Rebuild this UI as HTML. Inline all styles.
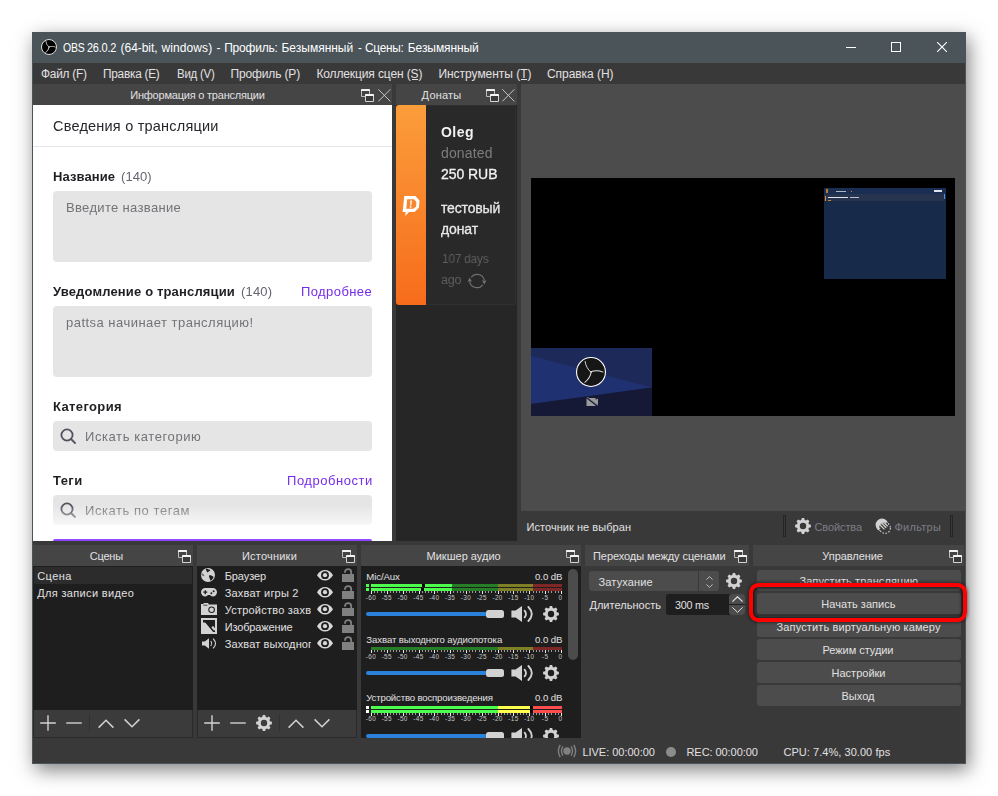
<!DOCTYPE html>
<html lang="ru">
<head>
<meta charset="utf-8">
<title>OBS 26.0.2 (64-bit, windows) - Профиль: Безымянный - Сцены: Безымянный</title>
<style>
html,body{margin:0;padding:0;background:#fff;}
body{width:998px;height:796px;overflow:hidden;position:relative;font-family:"Liberation Sans","DejaVu Sans",sans-serif;}
#root{position:absolute;left:0;top:0;width:998px;height:796px;overflow:hidden;}
#root div,#root svg,#root span.t{position:absolute;display:block;}
#root span.t{white-space:nowrap;}
#root div div, #root div span.t{position:absolute;}
</style>
</head>
<body>
<div id="root">
<div style="left:32px;top:32px;width:934px;height:732px;background:#3a393a;box-shadow:3px 6px 18px rgba(0,0,0,0.5);"></div>
<div style="left:32px;top:32px;width:934px;height:31px;background:#4a5459;"></div>
<div style="left:32px;top:63px;width:1px;height:701px;background:#4a5459;"></div>
<div style="left:965px;top:63px;width:1px;height:701px;background:#4a5459;"></div>
<div style="left:32px;top:763px;width:934px;height:1px;background:#4a5459;"></div>
<svg style="left:41px;top:39px;" width="16" height="16" viewBox="0 0 16 16"><circle cx="8.0" cy="8.0" r="7.50" fill="#000" stroke="#dcdcdc" stroke-width="1.0"/><path transform="rotate(0 8.0 8.0)" d="M8.16 8.32Q5.28 5.92 4.88 2.40" fill="none" stroke="#c8c8c8" stroke-width="0.9" stroke-linecap="round"/><path transform="rotate(120 8.0 8.0)" d="M8.16 8.32Q5.28 5.92 4.88 2.40" fill="none" stroke="#c8c8c8" stroke-width="0.9" stroke-linecap="round"/><path transform="rotate(240 8.0 8.0)" d="M8.16 8.32Q5.28 5.92 4.88 2.40" fill="none" stroke="#c8c8c8" stroke-width="0.9" stroke-linecap="round"/></svg>
<span class="t" style="left:62.6px;top:42.24px;font-size:12px;line-height:12px;color:#ffffff;letter-spacing:-0.250px;transform:scaleX(0.8698);transform-origin:0 0;">OBS</span>
<span class="t" style="left:87.1px;top:42.24px;font-size:12px;line-height:12px;color:#ffffff;letter-spacing:-0.250px;transform:scaleX(0.9125);transform-origin:0 0;">26.0.2</span>
<span class="t" style="left:120.6px;top:42.24px;font-size:12px;line-height:12px;color:#ffffff;letter-spacing:-0.061px;">(64-bit,</span>
<span class="t" style="left:161.4px;top:42.24px;font-size:12px;line-height:12px;color:#ffffff;letter-spacing:0.105px;">windows)</span>
<span class="t" style="left:216.5px;top:42.24px;font-size:12px;line-height:12px;color:#ffffff;letter-spacing:-0.200px;">-</span>
<span class="t" style="left:224.2px;top:42.24px;font-size:12px;line-height:12px;color:#ffffff;letter-spacing:-0.219px;">Профиль:</span>
<span class="t" style="left:281.5px;top:42.24px;font-size:12px;line-height:12px;color:#ffffff;letter-spacing:-0.005px;">Безымянный</span>
<span class="t" style="left:357.7px;top:42.24px;font-size:12px;line-height:12px;color:#ffffff;letter-spacing:-0.250px;transform:scaleX(0.9600);transform-origin:0 0;">-</span>
<span class="t" style="left:365.2px;top:42.24px;font-size:12px;line-height:12px;color:#ffffff;letter-spacing:-0.250px;transform:scaleX(0.9848);transform-origin:0 0;">Сцены:</span>
<span class="t" style="left:407.8px;top:42.24px;font-size:12px;line-height:12px;color:#ffffff;letter-spacing:-0.079px;">Безымянный</span>
<div style="left:846px;top:47px;width:10px;height:1px;background:#ffffff;"></div>
<svg style="left:891px;top:42px;" width="10" height="10" viewBox="0 0 10 10"><rect x="0.5" y="0.5" width="9" height="9" fill="none" stroke="#fff" stroke-width="1"/></svg>
<svg style="left:937px;top:42px;" width="10" height="10" viewBox="0 0 10 10"><path d="M0 0L10 10M10 0L0 10" stroke="#fff" stroke-width="1.1" fill="none"/></svg>
<div style="left:33px;top:63px;width:932px;height:21px;background:#3a393a;"></div>
<span class="t" style="left:41.3px;top:68.24px;font-size:12px;line-height:12px;color:#e1e0e1;letter-spacing:-0.250px;transform:scaleX(0.9893);transform-origin:0 0;">Файл (F)</span>
<span class="t" style="left:103.4px;top:68.24px;font-size:12px;line-height:12px;color:#e1e0e1;letter-spacing:-0.250px;transform:scaleX(0.9861);transform-origin:0 0;">Правка (E)</span>
<span class="t" style="left:176.6px;top:68.24px;font-size:12px;line-height:12px;color:#e1e0e1;letter-spacing:-0.250px;transform:scaleX(0.9538);transform-origin:0 0;">Вид (V)</span>
<span class="t" style="left:230.5px;top:68.24px;font-size:12px;line-height:12px;color:#e1e0e1;letter-spacing:-0.147px;">Профиль (P)</span>
<span class="t" style="left:316.4px;top:68.24px;font-size:12px;line-height:12px;color:#e1e0e1;letter-spacing:-0.121px;">Коллекция сцен (S)</span>
<span class="t" style="left:438.4px;top:68.24px;font-size:12px;line-height:12px;color:#e1e0e1;letter-spacing:-0.027px;">Инструменты (T)</span>
<span class="t" style="left:547px;top:68.24px;font-size:12px;line-height:12px;color:#e1e0e1;letter-spacing:-0.055px;">Справка (H)</span>
<div style="left:412px;top:79px;width:6px;height:1px;background:#e1e0e1;"></div>
<div style="left:521px;top:79px;width:6px;height:1px;background:#e1e0e1;"></div>
<div style="left:33px;top:84px;width:359px;height:21px;background:#464546;"></div>
<span class="t" style="left:130.2px;top:89.59px;font-size:11px;line-height:11px;color:#e1e0e1;letter-spacing:-0.213px;">Информация о трансляции</span>
<svg style="left:361px;top:89px;" width="13" height="13" viewBox="0 0 13 13"><path d="M0.5 1.5V7.5H8.5V1.5" fill="none" stroke="#bdbdbd" stroke-width="1"/><rect x="0" y="0" width="9" height="2" rx="0.6" fill="#f2f2f2"/><rect x="4" y="5" width="9" height="8" rx="0.8" fill="#3b3a3b"/><path d="M4.5 6.5V12.5H12.5V6.5" fill="none" stroke="#d4d4d4" stroke-width="1"/><rect x="4" y="5" width="9" height="2" rx="0.6" fill="#f6f6f6"/></svg>
<svg style="left:377.5px;top:89px;" width="13" height="13" viewBox="0 0 13 13"><path d="M0.3 0.3L12.4 12.4M12.4 0.3L0.3 12.4" stroke="#c4c4c4" stroke-width="1" fill="none"/></svg>
<div style="left:33px;top:105px;width:359px;height:436px;background:#ffffff;"></div>
<span class="t" style="left:53.4px;top:118.73px;font-size:14.5px;line-height:14.5px;color:#26262c;letter-spacing:0.209px;will-change:transform;">Сведения о трансляции</span>
<div style="left:33px;top:146px;width:359px;height:1px;background:#e6e6ea;"></div>
<span class="t" style="left:53.4px;top:169.80px;font-size:13px;line-height:13px;color:#1f1f23;font-weight:700;letter-spacing:0.097px;will-change:transform;">Название</span>
<span class="t" style="left:121.4px;top:169.80px;font-size:13px;line-height:13px;color:#65656f;letter-spacing:0.076px;will-change:transform;">(140)</span>
<div style="left:53px;top:191px;width:319px;height:71px;background:#e5e5e5;border-radius:4px;"></div>
<span class="t" style="left:65.5px;top:200.80px;font-size:13px;line-height:13px;color:#737378;letter-spacing:0.338px;will-change:transform;">Введите название</span>
<span class="t" style="left:53.4px;top:285.40px;font-size:13px;line-height:13px;color:#1f1f23;font-weight:700;letter-spacing:0.154px;will-change:transform;">Уведомление о трансляции</span>
<span class="t" style="left:240.5px;top:285.40px;font-size:13px;line-height:13px;color:#65656f;letter-spacing:0.187px;will-change:transform;">(140)</span>
<span class="t" style="left:301.2px;top:285.40px;font-size:13px;line-height:13px;color:#772ce8;letter-spacing:0.409px;will-change:transform;">Подробнее</span>
<div style="left:53px;top:306px;width:319px;height:71px;background:#e5e5e5;border-radius:4px;"></div>
<span class="t" style="left:65.5px;top:315.90px;font-size:13px;line-height:13px;color:#737378;letter-spacing:0.477px;will-change:transform;">pattsa начинает трансляцию!</span>
<span class="t" style="left:53.4px;top:400.00px;font-size:13px;line-height:13px;color:#1f1f23;font-weight:700;letter-spacing:0.374px;will-change:transform;">Категория</span>
<div style="left:53px;top:421px;width:319px;height:30px;background:#e5e5e5;border-radius:4px;"></div>
<svg style="left:60px;top:428px;" width="16" height="16" viewBox="0 0 16 16"><circle cx="7" cy="7" r="5.6" fill="none" stroke="#53535f" stroke-width="1.8"/><path d="M11 11L15 15" stroke="#53535f" stroke-width="1.8" stroke-linecap="round"/></svg>
<span class="t" style="left:85.3px;top:430.00px;font-size:13px;line-height:13px;color:#737378;letter-spacing:0.588px;will-change:transform;">Искать категорию</span>
<span class="t" style="left:53.4px;top:474.20px;font-size:13px;line-height:13px;color:#1f1f23;font-weight:700;letter-spacing:0.418px;will-change:transform;">Теги</span>
<span class="t" style="left:286.5px;top:474.20px;font-size:13px;line-height:13px;color:#772ce8;letter-spacing:0.542px;will-change:transform;">Подробности</span>
<div style="left:53px;top:495px;width:319px;height:30px;background:#e5e5e5;border-radius:4px;"></div>
<svg style="left:60px;top:502px;" width="16" height="16" viewBox="0 0 16 16"><circle cx="7" cy="7" r="5.6" fill="none" stroke="#53535f" stroke-width="1.8"/><path d="M11 11L15 15" stroke="#53535f" stroke-width="1.8" stroke-linecap="round"/></svg>
<span class="t" style="left:85.3px;top:503.60px;font-size:13px;line-height:13px;color:#737378;letter-spacing:0.555px;will-change:transform;">Искать по тегам</span>
<div style="left:33px;top:505px;width:359px;height:34px;background:linear-gradient(to bottom, rgba(255,255,255,0) 0%, rgba(255,255,255,0.95) 80%, #fff 100%);"></div>
<div style="left:53px;top:539px;width:319px;height:2px;background:#9147ff;border-radius:4px 4px 0 0;"></div>
<div style="left:396px;top:84px;width:121px;height:21px;background:#464546;"></div>
<span class="t" style="left:421.6px;top:89.59px;font-size:11px;line-height:11px;color:#e1e0e1;letter-spacing:0.219px;">Донаты</span>
<svg style="left:486px;top:89px;" width="13" height="13" viewBox="0 0 13 13"><path d="M0.5 1.5V7.5H8.5V1.5" fill="none" stroke="#bdbdbd" stroke-width="1"/><rect x="0" y="0" width="9" height="2" rx="0.6" fill="#f2f2f2"/><rect x="4" y="5" width="9" height="8" rx="0.8" fill="#3b3a3b"/><path d="M4.5 6.5V12.5H12.5V6.5" fill="none" stroke="#d4d4d4" stroke-width="1"/><rect x="4" y="5" width="9" height="2" rx="0.6" fill="#f6f6f6"/></svg>
<svg style="left:502px;top:89px;" width="13" height="13" viewBox="0 0 13 13"><path d="M0.3 0.3L12.4 12.4M12.4 0.3L0.3 12.4" stroke="#c4c4c4" stroke-width="1" fill="none"/></svg>
<div style="left:396px;top:105px;width:121px;height:436px;background:#262626;"></div>
<div style="left:396px;top:105px;width:120px;height:200px;background:#292929;border-radius:3px;box-sizing:border-box;border:1px solid #303030;"></div>
<div style="left:396px;top:105px;width:30px;height:200px;background:linear-gradient(to bottom,#fb9d3b,#f76c1c);border-radius:3px 0 0 3px;"></div>
<span class="t" style="left:440.8px;top:125.15px;font-size:14px;line-height:14px;color:#f2f2f2;font-weight:700;letter-spacing:0.450px;will-change:transform;">Oleg</span>
<span class="t" style="left:441px;top:146.15px;font-size:14px;line-height:14px;color:#7d7d7d;letter-spacing:0.137px;will-change:transform;">donated</span>
<span class="t" style="left:441px;top:167.15px;font-size:14px;line-height:14px;color:#f2f2f2;letter-spacing:-0.048px;will-change:transform;-webkit-text-stroke:0.3px #f2f2f2;">250 RUB</span>
<span class="t" style="left:441px;top:200.95px;font-size:14px;line-height:14px;color:#e8e8e8;letter-spacing:-0.161px;will-change:transform;-webkit-text-stroke:0.3px #e8e8e8;">тестовый</span>
<span class="t" style="left:441px;top:221.75px;font-size:14px;line-height:14px;color:#e8e8e8;letter-spacing:-0.128px;will-change:transform;-webkit-text-stroke:0.3px #e8e8e8;">донат</span>
<span class="t" style="left:441.5px;top:252.62px;font-size:12.5px;line-height:12.5px;color:#5e5e5e;letter-spacing:-0.250px;transform:scaleX(0.9517);transform-origin:0 0;will-change:transform;">107 days</span>
<span class="t" style="left:441.3px;top:274.02px;font-size:12.5px;line-height:12.5px;color:#5e5e5e;letter-spacing:-0.250px;transform:scaleX(0.9934);transform-origin:0 0;will-change:transform;">ago</span>
<svg style="left:402px;top:195px;" width="19" height="22" viewBox="0 0 19 22"><path d="M2.3 1H13.4L17.5 5.4L17 12.6L12.6 17H6.9L3.3 21L3.6 17H0.6Z" fill="#fff"/><path d="M5.2 4.2H12L14.4 6.9L14.1 11.5L11.3 13.8H4.3Z" fill="#f9852c"/><path d="M8.3 5.6H9.9L9.4 10.4H8.2Z" fill="#fff"/><circle cx="8.6" cy="11.9" r="0.9" fill="#fff"/></svg>
<svg style="left:467px;top:271px;" width="20" height="20" viewBox="0 0 20 20"><path d="M4.2 6.2A7.4 7.4 0 0 1 17.3 9.2" fill="none" stroke="#707070" stroke-width="1.2"/><path d="M15.8 13.8A7.4 7.4 0 0 1 2.7 10.8" fill="none" stroke="#707070" stroke-width="1.2"/><path d="M0.6 10.6L2.7 6.6L4.9 10.6Z" fill="#707070"/><path d="M15.1 9.4L17.3 13.4L19.4 9.4Z" fill="#707070"/></svg>
<div style="left:521px;top:84px;width:444px;height:427px;background:#4c4c4c;"></div>
<div style="left:531px;top:178px;width:424px;height:238px;background:#000000;"></div>
<div style="left:824px;top:188px;width:122px;height:91px;background:#182a4a;"></div>
<div style="left:824px;top:188px;width:122px;height:6px;background:#1a2d52;"></div>
<div style="left:824px;top:194px;width:120px;height:7px;background:#27344f;"></div>
<div style="left:824.6px;top:195.6px;width:1.1px;height:5.2px;background:#f08a24;"></div>
<div style="left:944px;top:193.6px;width:1.1px;height:5.6px;background:#4a90e2;"></div>
<div style="left:826px;top:189.4px;width:2.4px;height:3.2px;background:#b9802f;"></div>
<div style="left:835.5px;top:190.7px;width:10.5px;height:1.4px;background:#aeb6c4;"></div>
<div style="left:850.6px;top:191px;width:1.3px;height:1.3px;background:#e88a26;"></div>
<div style="left:934px;top:190.2px;width:8px;height:2px;background:#dfe3ea;"></div>
<div style="left:828px;top:196.8px;width:19.5px;height:1.5px;background:#dfe4ec;"></div>
<div style="left:849.5px;top:196.8px;width:9px;height:1.5px;background:#b9c1cf;"></div>
<div style="left:828px;top:200px;width:3px;height:0.8px;background:#c8862a;"></div>
<svg style="left:531px;top:348px;" width="121" height="68" viewBox="0 0 121 68"><rect width="121" height="68" fill="#1d2a59"/><path d="M0 7.8L121 39.4L0 56Z" fill="#1f3170"/><path d="M0 56L121 39.4V68H0Z" fill="#161935"/></svg>
<svg style="left:576.4px;top:356.6px;" width="30" height="30" viewBox="0 0 30 30"><circle cx="15.0" cy="15.0" r="14.45" fill="#161616" stroke="#ffffff" stroke-width="1.1"/><path transform="rotate(0 15.0 15.0)" d="M15.30 15.60Q9.90 11.10 9.15 4.50" fill="none" stroke="#e8e8e8" stroke-width="0.9" stroke-linecap="round"/><path transform="rotate(120 15.0 15.0)" d="M15.30 15.60Q9.90 11.10 9.15 4.50" fill="none" stroke="#e8e8e8" stroke-width="0.9" stroke-linecap="round"/><path transform="rotate(240 15.0 15.0)" d="M15.30 15.60Q9.90 11.10 9.15 4.50" fill="none" stroke="#e8e8e8" stroke-width="0.9" stroke-linecap="round"/></svg>
<svg style="left:585.5px;top:397px;" width="12" height="9" viewBox="0 0 12 9"><path d="M0.5 1H9.5V2.8L12 1.4V8L9.5 6.6V9H0.5Z" fill="#9a9a9a"/><path d="M0 0L11.5 9" stroke="#16183a" stroke-width="1.6"/><path d="M0.4 -0.6L12 8.4" stroke="#9a9a9a" stroke-width="0.8"/></svg>
<div style="left:521px;top:511px;width:444px;height:30px;background:#3a393a;"></div>
<span class="t" style="left:526.5px;top:521.69px;font-size:11px;line-height:11px;color:#e1e0e1;letter-spacing:0.050px;">Источник не выбран</span>
<div style="left:783px;top:515px;width:3px;height:22px;background:#3a393a;box-sizing:border-box;border:1px solid #262526;"></div>
<div style="left:950px;top:515px;width:3px;height:22px;background:#3a393a;box-sizing:border-box;border:1px solid #262526;"></div>
<svg style="left:795px;top:518px;" width="16" height="16" viewBox="0 0 16 16"><path fill-rule="evenodd" fill="#d2d2d2" d="M6.27 2.09L6.83 0.09L9.17 0.09L9.73 2.09L10.96 2.60L12.77 1.57L14.43 3.23L13.40 5.04L13.91 6.27L15.91 6.83L15.91 9.17L13.91 9.73L13.40 10.96L14.43 12.77L12.77 14.43L10.96 13.40L9.73 13.91L9.17 15.91L6.83 15.91L6.27 13.91L5.04 13.40L3.23 14.43L1.57 12.77L2.60 10.96L2.09 9.73L0.09 9.17L0.09 6.83L2.09 6.27L2.60 5.04L1.57 3.23L3.23 1.57L5.04 2.60ZM11.20 8.00A3.2 3.2 0 1 0 4.80 8.00A3.2 3.2 0 1 0 11.20 8.00Z"/></svg>
<svg style="left:875px;top:518px;" width="17" height="17" viewBox="0 0 17 17"><circle cx="7" cy="7" r="6.4" fill="#d2d2d2"/><circle cx="10" cy="10" r="6" fill="#3a393a"/><circle cx="10" cy="10" r="5.4" fill="none" stroke="#d2d2d2" stroke-width="1.1" stroke-dasharray="1.6 1.5"/><path d="M4.4 6.4L9.4 11.4M6 4.6L11.2 9.8M7.8 3.4L12.6 8.2" stroke="#d2d2d2" stroke-width="1.3"/></svg>
<span class="t" style="left:814.5px;top:521.69px;font-size:11px;line-height:11px;color:#7c7c86;letter-spacing:-0.108px;">Свойства</span>
<span class="t" style="left:894.5px;top:521.69px;font-size:11px;line-height:11px;color:#7c7c86;letter-spacing:0.252px;">Фильтры</span>
<div style="left:33px;top:545px;width:160px;height:21px;background:#464546;"></div>
<span class="t" style="left:89.8px;top:551.09px;font-size:11px;line-height:11px;color:#e1e0e1;letter-spacing:-0.230px;">Сцены</span>
<svg style="left:178px;top:550px;" width="13" height="13" viewBox="0 0 13 13"><path d="M0.5 1.5V7.5H8.5V1.5" fill="none" stroke="#bdbdbd" stroke-width="1"/><rect x="0" y="0" width="9" height="2" rx="0.6" fill="#f2f2f2"/><rect x="4" y="5" width="9" height="8" rx="0.8" fill="#3b3a3b"/><path d="M4.5 6.5V12.5H12.5V6.5" fill="none" stroke="#d4d4d4" stroke-width="1"/><rect x="4" y="5" width="9" height="2" rx="0.6" fill="#f6f6f6"/></svg>
<div style="left:197px;top:545px;width:160px;height:21px;background:#464546;"></div>
<span class="t" style="left:242px;top:551.09px;font-size:11px;line-height:11px;color:#e1e0e1;letter-spacing:0.211px;">Источники</span>
<svg style="left:342px;top:550px;" width="13" height="13" viewBox="0 0 13 13"><path d="M0.5 1.5V7.5H8.5V1.5" fill="none" stroke="#bdbdbd" stroke-width="1"/><rect x="0" y="0" width="9" height="2" rx="0.6" fill="#f2f2f2"/><rect x="4" y="5" width="9" height="8" rx="0.8" fill="#3b3a3b"/><path d="M4.5 6.5V12.5H12.5V6.5" fill="none" stroke="#d4d4d4" stroke-width="1"/><rect x="4" y="5" width="9" height="2" rx="0.6" fill="#f6f6f6"/></svg>
<div style="left:361px;top:545px;width:220px;height:21px;background:#464546;"></div>
<span class="t" style="left:426.5px;top:551.09px;font-size:11px;line-height:11px;color:#e1e0e1;letter-spacing:0.013px;">Микшер аудио</span>
<svg style="left:566px;top:550px;" width="13" height="13" viewBox="0 0 13 13"><path d="M0.5 1.5V7.5H8.5V1.5" fill="none" stroke="#bdbdbd" stroke-width="1"/><rect x="0" y="0" width="9" height="2" rx="0.6" fill="#f2f2f2"/><rect x="4" y="5" width="9" height="8" rx="0.8" fill="#3b3a3b"/><path d="M4.5 6.5V12.5H12.5V6.5" fill="none" stroke="#d4d4d4" stroke-width="1"/><rect x="4" y="5" width="9" height="2" rx="0.6" fill="#f6f6f6"/></svg>
<div style="left:585px;top:545px;width:164px;height:21px;background:#464546;"></div>
<span class="t" style="left:593px;top:551.09px;font-size:11px;line-height:11px;color:#e1e0e1;letter-spacing:-0.071px;">Переходы между сценами</span>
<svg style="left:734px;top:550px;" width="13" height="13" viewBox="0 0 13 13"><path d="M0.5 1.5V7.5H8.5V1.5" fill="none" stroke="#bdbdbd" stroke-width="1"/><rect x="0" y="0" width="9" height="2" rx="0.6" fill="#f2f2f2"/><rect x="4" y="5" width="9" height="8" rx="0.8" fill="#3b3a3b"/><path d="M4.5 6.5V12.5H12.5V6.5" fill="none" stroke="#d4d4d4" stroke-width="1"/><rect x="4" y="5" width="9" height="2" rx="0.6" fill="#f6f6f6"/></svg>
<div style="left:753px;top:545px;width:211px;height:21px;background:#464546;"></div>
<span class="t" style="left:822.3px;top:551.09px;font-size:11px;line-height:11px;color:#e1e0e1;letter-spacing:-0.059px;">Управление</span>
<svg style="left:949px;top:550px;" width="13" height="13" viewBox="0 0 13 13"><path d="M0.5 1.5V7.5H8.5V1.5" fill="none" stroke="#bdbdbd" stroke-width="1"/><rect x="0" y="0" width="9" height="2" rx="0.6" fill="#f2f2f2"/><rect x="4" y="5" width="9" height="8" rx="0.8" fill="#3b3a3b"/><path d="M4.5 6.5V12.5H12.5V6.5" fill="none" stroke="#d4d4d4" stroke-width="1"/><rect x="4" y="5" width="9" height="2" rx="0.6" fill="#f6f6f6"/></svg>
<div style="left:33px;top:566px;width:160px;height:144px;background:#1f1e1f;"></div>
<div style="left:34px;top:567px;width:158px;height:17px;background:#2d2c2d;"></div>
<span class="t" style="left:37.2px;top:571.09px;font-size:11px;line-height:11px;color:#e1e0e1;letter-spacing:0.414px;">Сцена</span>
<span class="t" style="left:37.2px;top:588.09px;font-size:11px;line-height:11px;color:#e1e0e1;letter-spacing:0.342px;">Для записи видео</span>
<div style="left:33px;top:710px;width:160px;height:28px;background:#3c3b3c;box-sizing:border-box;border:1px solid #2b2a2b;border-top:none;"></div>
<svg style="left:40px;top:715px;" width="16" height="16" viewBox="0 0 16 16"><path d="M8 0.2V15.8M0.2 8H15.8" stroke="#d2d2d2" stroke-width="1.4" fill="none"/></svg>
<svg style="left:66px;top:715px;" width="16" height="16" viewBox="0 0 16 16"><path d="M0.2 8H15.8" stroke="#d2d2d2" stroke-width="1.4" fill="none"/></svg>
<div style="left:89px;top:714px;width:1px;height:18px;background:#333233;"></div>
<svg style="left:98px;top:715px;" width="16" height="16" viewBox="0 0 16 16"><path d="M0.6 12.6L8 5.2L15.4 12.6" stroke="#d2d2d2" stroke-width="1.5" fill="none"/></svg>
<svg style="left:124px;top:715px;" width="16" height="16" viewBox="0 0 16 16"><path d="M0.6 4.4L8 11.8L15.4 4.4" stroke="#d2d2d2" stroke-width="1.5" fill="none"/></svg>
<div style="left:197px;top:566px;width:160px;height:144px;background:#1f1e1f;"></div>
<span class="t" style="left:224.7px;top:571.09px;font-size:11px;line-height:11px;color:#e1e0e1;letter-spacing:-0.077px;">Браузер</span>
<span class="t" style="left:224.7px;top:588.09px;font-size:11px;line-height:11px;color:#e1e0e1;letter-spacing:0.199px;">Захват игры 2</span>
<div style="left:224.7px;top:603.09px;width:86.5px;height:17px;overflow:hidden;background:none"><span class="t" style="left:0;top:2px;font-size:11px;line-height:11px;color:#e1e0e1;letter-spacing:0.230px;">Устройство захвата видео</span></div>
<span class="t" style="left:224.7px;top:622.09px;font-size:11px;line-height:11px;color:#e1e0e1;letter-spacing:-0.143px;">Изображение</span>
<div style="left:224.7px;top:637.09px;width:86.5px;height:17px;overflow:hidden;background:none"><span class="t" style="left:0;top:2px;font-size:11px;line-height:11px;color:#e1e0e1;letter-spacing:0.132px;">Захват выходного аудиопотока</span></div>
<div style="left:197px;top:710px;width:160px;height:28px;background:#3c3b3c;box-sizing:border-box;border:1px solid #2b2a2b;border-top:none;"></div>
<svg style="left:204px;top:715px;" width="16" height="16" viewBox="0 0 16 16"><path d="M8 0.2V15.8M0.2 8H15.8" stroke="#d2d2d2" stroke-width="1.4" fill="none"/></svg>
<svg style="left:230px;top:715px;" width="16" height="16" viewBox="0 0 16 16"><path d="M0.2 8H15.8" stroke="#d2d2d2" stroke-width="1.4" fill="none"/></svg>
<svg style="left:256px;top:715px;" width="16" height="16" viewBox="0 0 16 16"><path fill-rule="evenodd" fill="#d2d2d2" d="M6.27 2.09L6.83 0.09L9.17 0.09L9.73 2.09L10.96 2.60L12.77 1.57L14.43 3.23L13.40 5.04L13.91 6.27L15.91 6.83L15.91 9.17L13.91 9.73L13.40 10.96L14.43 12.77L12.77 14.43L10.96 13.40L9.73 13.91L9.17 15.91L6.83 15.91L6.27 13.91L5.04 13.40L3.23 14.43L1.57 12.77L2.60 10.96L2.09 9.73L0.09 9.17L0.09 6.83L2.09 6.27L2.60 5.04L1.57 3.23L3.23 1.57L5.04 2.60ZM11.20 8.00A3.2 3.2 0 1 0 4.80 8.00A3.2 3.2 0 1 0 11.20 8.00Z"/></svg>
<div style="left:279px;top:714px;width:1px;height:18px;background:#333233;"></div>
<svg style="left:288px;top:715px;" width="16" height="16" viewBox="0 0 16 16"><path d="M0.6 12.6L8 5.2L15.4 12.6" stroke="#d2d2d2" stroke-width="1.5" fill="none"/></svg>
<svg style="left:314px;top:715px;" width="16" height="16" viewBox="0 0 16 16"><path d="M0.6 4.4L8 11.8L15.4 4.4" stroke="#d2d2d2" stroke-width="1.5" fill="none"/></svg>
<svg style="left:201px;top:568px;" width="14" height="14" viewBox="0 0 14 14"><circle cx="7" cy="7" r="7" fill="#d2d2d2"/><path d="M5.6 0.6C7.2 1.8 8.6 1.2 9.4 2.4C8.4 3.4 7 3.2 6.6 4.6C5.4 4 5.8 2.4 4.6 1.6Z" fill="#1f1e1f"/><path d="M8 7.4C9.6 7.2 11.4 7.6 12.6 9C12 10.8 10.8 12.2 9.4 12.8C9.6 11 7.6 9.6 8 7.4Z" fill="#1f1e1f"/><path d="M1 5.2C2.4 5.8 3.4 6.8 3.2 8.2C2.2 8.4 1.2 7.6 0.6 6.8Z" fill="#1f1e1f" opacity="0.6"/></svg>
<svg style="left:201px;top:588px;" width="16" height="9" viewBox="0 0 16 9"><path d="M4.2 0H11.8A4.2 4.2 0 0 1 11.8 8.4C10.4 8.4 9.8 7.6 9 7H7C6.2 7.6 5.6 8.4 4.2 8.4A4.2 4.2 0 0 1 4.2 0Z" fill="#d2d2d2"/><path d="M4.3 2.2V6.2M2.3 4.2H6.3" stroke="#1f1e1f" stroke-width="1.3" fill="none"/><circle cx="10.4" cy="5.2" r="1" fill="#1f1e1f"/><circle cx="12.6" cy="3.2" r="1" fill="#1f1e1f"/></svg>
<svg style="left:201px;top:603px;" width="16" height="12" viewBox="0 0 16 12"><path d="M0 1H2.2L3 0H7L7.8 1.4H16V12H0Z" fill="#d2d2d2"/><path d="M2.4 2.2H6.4" stroke="#1f1e1f" stroke-width="0.8"/><circle cx="10.6" cy="6.8" r="3.3" fill="#1f1e1f"/><circle cx="10.6" cy="6.8" r="2.3" fill="#d2d2d2"/></svg>
<svg style="left:201px;top:618px;" width="16" height="16" viewBox="0 0 16 16"><rect x="0" y="0" width="16" height="16" fill="#d2d2d2"/><path d="M2 2H14V10.5L12 8.2L10.6 9.8L14 14H12.4L4.4 4.6L2 4.6Z" fill="#1f1e1f"/><path d="M2 2H14V4H2Z" fill="#1f1e1f"/><path d="M14 4V14L12.4 14L4 4Z" fill="#1f1e1f"/><path d="M10.4 9.4L12 7.8L14 10.2V12.6L12.6 12.2Z" fill="#d2d2d2"/></svg>
<svg style="left:201.5px;top:637.5px;" width="15" height="11" viewBox="0 0 15 11"><path d="M0 3.4H2.8L7 0.3V10.7L2.8 7.6H0Z" fill="#d2d2d2"/><path d="M9 3.4Q10.6 5.5 9 7.6" fill="none" stroke="#d2d2d2" stroke-width="1.1" stroke-linecap="round"/><path d="M11.4 1Q15.6 5.5 11.4 10" fill="none" stroke="#d2d2d2" stroke-width="1.1" stroke-linecap="round"/></svg>
<svg style="left:317px;top:570px;" width="16" height="11" viewBox="0 0 16 11"><path d="M0 5.2C2.2 1.6 5 0 8 0S13.8 1.6 16 5.2C13.8 8.8 11 10.4 8 10.4S2.2 8.8 0 5.2Z" fill="#d8d8d8"/><circle cx="8" cy="5.2" r="3.9" fill="#1f1e1f"/><circle cx="8" cy="5.2" r="2.1" fill="#d8d8d8"/></svg>
<svg style="left:342px;top:568px;" width="13" height="14" viewBox="0 0 13 14"><rect x="0" y="6" width="12" height="8" fill="#808080"/><path d="M3 4.8V4.2A3.1 3.1 0 0 1 9.2 4.2V6.5" fill="none" stroke="#808080" stroke-width="1.8"/></svg>
<svg style="left:317px;top:587px;" width="16" height="11" viewBox="0 0 16 11"><path d="M0 5.2C2.2 1.6 5 0 8 0S13.8 1.6 16 5.2C13.8 8.8 11 10.4 8 10.4S2.2 8.8 0 5.2Z" fill="#d8d8d8"/><circle cx="8" cy="5.2" r="3.9" fill="#1f1e1f"/><circle cx="8" cy="5.2" r="2.1" fill="#d8d8d8"/></svg>
<svg style="left:342px;top:585px;" width="13" height="14" viewBox="0 0 13 14"><rect x="0" y="6" width="12" height="8" fill="#808080"/><path d="M3 4.8V4.2A3.1 3.1 0 0 1 9.2 4.2V6.5" fill="none" stroke="#808080" stroke-width="1.8"/></svg>
<svg style="left:317px;top:604px;" width="16" height="11" viewBox="0 0 16 11"><path d="M0 5.2C2.2 1.6 5 0 8 0S13.8 1.6 16 5.2C13.8 8.8 11 10.4 8 10.4S2.2 8.8 0 5.2Z" fill="#d8d8d8"/><circle cx="8" cy="5.2" r="3.9" fill="#1f1e1f"/><circle cx="8" cy="5.2" r="2.1" fill="#d8d8d8"/></svg>
<svg style="left:342px;top:602px;" width="13" height="14" viewBox="0 0 13 14"><rect x="0" y="6" width="12" height="8" fill="#808080"/><path d="M3 4.8V4.2A3.1 3.1 0 0 1 9.2 4.2V6.5" fill="none" stroke="#808080" stroke-width="1.8"/></svg>
<svg style="left:317px;top:621px;" width="16" height="11" viewBox="0 0 16 11"><path d="M0 5.2C2.2 1.6 5 0 8 0S13.8 1.6 16 5.2C13.8 8.8 11 10.4 8 10.4S2.2 8.8 0 5.2Z" fill="#d8d8d8"/><circle cx="8" cy="5.2" r="3.9" fill="#1f1e1f"/><circle cx="8" cy="5.2" r="2.1" fill="#d8d8d8"/></svg>
<svg style="left:342px;top:619px;" width="13" height="14" viewBox="0 0 13 14"><rect x="0" y="6" width="12" height="8" fill="#808080"/><path d="M3 4.8V4.2A3.1 3.1 0 0 1 9.2 4.2V6.5" fill="none" stroke="#808080" stroke-width="1.8"/></svg>
<svg style="left:317px;top:638px;" width="16" height="11" viewBox="0 0 16 11"><path d="M0 5.2C2.2 1.6 5 0 8 0S13.8 1.6 16 5.2C13.8 8.8 11 10.4 8 10.4S2.2 8.8 0 5.2Z" fill="#d8d8d8"/><circle cx="8" cy="5.2" r="3.9" fill="#1f1e1f"/><circle cx="8" cy="5.2" r="2.1" fill="#d8d8d8"/></svg>
<svg style="left:342px;top:636px;" width="13" height="14" viewBox="0 0 13 14"><rect x="0" y="6" width="12" height="8" fill="#808080"/><path d="M3 4.8V4.2A3.1 3.1 0 0 1 9.2 4.2V6.5" fill="none" stroke="#808080" stroke-width="1.8"/></svg>
<div style="left:361px;top:566px;width:220px;height:172px;background:#1f1e1f;"></div>
<div style="left:568px;top:569px;width:10px;height:91px;background:#4c4c4c;border-radius:5px;"></div>
<span class="t" style="left:366.3px;top:571.87px;font-size:9.6px;line-height:9.6px;color:#e1e0e1;letter-spacing:-0.112px;">Mic/Aux</span>
<span class="t" style="left:535px;top:571.87px;font-size:9.6px;line-height:9.6px;color:#e1e0e1;letter-spacing:-0.045px;">0.0 dB</span>
<div style="left:371px;top:584px;width:127px;height:3px;background:#267f26;"></div>
<div style="left:498px;top:584px;width:35px;height:3px;background:#7f7f26;"></div>
<div style="left:533px;top:584px;width:29px;height:3px;background:#7f2626;"></div>
<div style="left:371px;top:584px;width:81px;height:3px;background:#4cff4c;"></div>
<div style="left:422px;top:584px;width:3px;height:3px;background:#000;"></div>
<div style="left:366px;top:584px;width:3px;height:3px;background:#4cff4c;"></div>
<div style="left:371px;top:588px;width:127px;height:3px;background:#267f26;"></div>
<div style="left:498px;top:588px;width:35px;height:3px;background:#7f7f26;"></div>
<div style="left:533px;top:588px;width:29px;height:3px;background:#7f2626;"></div>
<div style="left:371px;top:588px;width:81px;height:3px;background:#4cff4c;"></div>
<div style="left:421px;top:588px;width:3px;height:3px;background:#000;"></div>
<div style="left:366px;top:588px;width:3px;height:3px;background:#4cff4c;"></div>
<svg style="left:371px;top:591px;" width="192" height="3" viewBox="0 0 192 3"><rect x="0" y="0" width="1" height="3" fill="#e8e8e8"/><rect x="3" y="0" width="1" height="2" fill="#9c9c9c"/><rect x="6" y="0" width="1" height="2" fill="#9c9c9c"/><rect x="10" y="0" width="1" height="2" fill="#9c9c9c"/><rect x="13" y="0" width="1" height="2" fill="#9c9c9c"/><rect x="16" y="0" width="1" height="3" fill="#e8e8e8"/><rect x="19" y="0" width="1" height="2" fill="#9c9c9c"/><rect x="22" y="0" width="1" height="2" fill="#9c9c9c"/><rect x="25" y="0" width="1" height="2" fill="#9c9c9c"/><rect x="28" y="0" width="1" height="2" fill="#9c9c9c"/><rect x="32" y="0" width="1" height="3" fill="#e8e8e8"/><rect x="35" y="0" width="1" height="2" fill="#9c9c9c"/><rect x="38" y="0" width="1" height="2" fill="#9c9c9c"/><rect x="41" y="0" width="1" height="2" fill="#9c9c9c"/><rect x="44" y="0" width="1" height="2" fill="#9c9c9c"/><rect x="48" y="0" width="1" height="3" fill="#e8e8e8"/><rect x="51" y="0" width="1" height="2" fill="#9c9c9c"/><rect x="54" y="0" width="1" height="2" fill="#9c9c9c"/><rect x="57" y="0" width="1" height="2" fill="#9c9c9c"/><rect x="60" y="0" width="1" height="2" fill="#9c9c9c"/><rect x="63" y="0" width="1" height="3" fill="#e8e8e8"/><rect x="66" y="0" width="1" height="2" fill="#9c9c9c"/><rect x="70" y="0" width="1" height="2" fill="#9c9c9c"/><rect x="73" y="0" width="1" height="2" fill="#9c9c9c"/><rect x="76" y="0" width="1" height="2" fill="#9c9c9c"/><rect x="79" y="0" width="1" height="3" fill="#e8e8e8"/><rect x="82" y="0" width="1" height="2" fill="#9c9c9c"/><rect x="86" y="0" width="1" height="2" fill="#9c9c9c"/><rect x="89" y="0" width="1" height="2" fill="#9c9c9c"/><rect x="92" y="0" width="1" height="2" fill="#9c9c9c"/><rect x="95" y="0" width="1" height="3" fill="#e8e8e8"/><rect x="98" y="0" width="1" height="2" fill="#9c9c9c"/><rect x="101" y="0" width="1" height="2" fill="#9c9c9c"/><rect x="104" y="0" width="1" height="2" fill="#9c9c9c"/><rect x="108" y="0" width="1" height="2" fill="#9c9c9c"/><rect x="111" y="0" width="1" height="3" fill="#e8e8e8"/><rect x="114" y="0" width="1" height="2" fill="#9c9c9c"/><rect x="117" y="0" width="1" height="2" fill="#9c9c9c"/><rect x="120" y="0" width="1" height="2" fill="#9c9c9c"/><rect x="124" y="0" width="1" height="2" fill="#9c9c9c"/><rect x="127" y="0" width="1" height="3" fill="#e8e8e8"/><rect x="130" y="0" width="1" height="2" fill="#9c9c9c"/><rect x="133" y="0" width="1" height="2" fill="#9c9c9c"/><rect x="136" y="0" width="1" height="2" fill="#9c9c9c"/><rect x="139" y="0" width="1" height="2" fill="#9c9c9c"/><rect x="142" y="0" width="1" height="3" fill="#e8e8e8"/><rect x="146" y="0" width="1" height="2" fill="#9c9c9c"/><rect x="149" y="0" width="1" height="2" fill="#9c9c9c"/><rect x="152" y="0" width="1" height="2" fill="#9c9c9c"/><rect x="155" y="0" width="1" height="2" fill="#9c9c9c"/><rect x="158" y="0" width="1" height="3" fill="#e8e8e8"/><rect x="162" y="0" width="1" height="2" fill="#9c9c9c"/><rect x="165" y="0" width="1" height="2" fill="#9c9c9c"/><rect x="168" y="0" width="1" height="2" fill="#9c9c9c"/><rect x="171" y="0" width="1" height="2" fill="#9c9c9c"/><rect x="174" y="0" width="1" height="3" fill="#e8e8e8"/><rect x="177" y="0" width="1" height="2" fill="#9c9c9c"/><rect x="180" y="0" width="1" height="2" fill="#9c9c9c"/><rect x="184" y="0" width="1" height="2" fill="#9c9c9c"/><rect x="187" y="0" width="1" height="2" fill="#9c9c9c"/><rect x="190" y="0" width="1" height="3" fill="#e8e8e8"/></svg>
<span class="t" style="left:365.8px;top:594.58px;font-size:6.4px;line-height:6.4px;color:#c4c4c4;letter-spacing:0.340px;">-60</span>
<span class="t" style="left:381.6333333333333px;top:594.58px;font-size:6.4px;line-height:6.4px;color:#c4c4c4;letter-spacing:0.340px;">-55</span>
<span class="t" style="left:397.4666666666667px;top:594.58px;font-size:6.4px;line-height:6.4px;color:#c4c4c4;letter-spacing:0.340px;">-50</span>
<span class="t" style="left:413.3px;top:594.58px;font-size:6.4px;line-height:6.4px;color:#c4c4c4;letter-spacing:0.340px;">-45</span>
<span class="t" style="left:429.1333333333333px;top:594.58px;font-size:6.4px;line-height:6.4px;color:#c4c4c4;letter-spacing:0.340px;">-40</span>
<span class="t" style="left:444.9666666666667px;top:594.58px;font-size:6.4px;line-height:6.4px;color:#c4c4c4;letter-spacing:0.340px;">-35</span>
<span class="t" style="left:460.8px;top:594.58px;font-size:6.4px;line-height:6.4px;color:#c4c4c4;letter-spacing:0.340px;">-30</span>
<span class="t" style="left:476.6333333333333px;top:594.58px;font-size:6.4px;line-height:6.4px;color:#c4c4c4;letter-spacing:0.340px;">-25</span>
<span class="t" style="left:492.4666666666667px;top:594.58px;font-size:6.4px;line-height:6.4px;color:#c4c4c4;letter-spacing:0.340px;">-20</span>
<span class="t" style="left:508.3px;top:594.58px;font-size:6.4px;line-height:6.4px;color:#c4c4c4;letter-spacing:0.340px;">-15</span>
<span class="t" style="left:524.1333333333334px;top:594.58px;font-size:6.4px;line-height:6.4px;color:#c4c4c4;letter-spacing:0.340px;">-10</span>
<span class="t" style="left:541.6666666666666px;top:594.58px;font-size:6.4px;line-height:6.4px;color:#c4c4c4;letter-spacing:0.675px;">-5</span>
<span class="t" style="left:558.4px;top:594.58px;font-size:6.4px;line-height:6.4px;color:#c4c4c4;letter-spacing:0.537px;">0</span>
<div style="left:366px;top:612px;width:121px;height:4px;background:#2a82da;border-radius:2px;"></div>
<div style="left:486px;top:610px;width:18px;height:8px;background:#d2d2d2;border-radius:2.5px;"></div>
<svg style="left:511px;top:606px;" width="23" height="16" viewBox="0 0 23 16"><path d="M0.4 4.4H4.6L11 0V16L4.6 11.6H0.4Z" fill="#d2d2d2"/><path d="M13.6 4.6Q16.4 8 13.6 11.4" fill="none" stroke="#d2d2d2" stroke-width="1.8" stroke-linecap="round"/><path d="M17.4 1Q24.2 8 17.4 15" fill="none" stroke="#d2d2d2" stroke-width="1.8" stroke-linecap="round"/></svg>
<svg style="left:543px;top:606px;" width="16" height="16" viewBox="0 0 16 16"><path fill-rule="evenodd" fill="#d2d2d2" d="M6.27 2.09L6.83 0.09L9.17 0.09L9.73 2.09L10.96 2.60L12.77 1.57L14.43 3.23L13.40 5.04L13.91 6.27L15.91 6.83L15.91 9.17L13.91 9.73L13.40 10.96L14.43 12.77L12.77 14.43L10.96 13.40L9.73 13.91L9.17 15.91L6.83 15.91L6.27 13.91L5.04 13.40L3.23 14.43L1.57 12.77L2.60 10.96L2.09 9.73L0.09 9.17L0.09 6.83L2.09 6.27L2.60 5.04L1.57 3.23L3.23 1.57L5.04 2.60ZM11.20 8.00A3.2 3.2 0 1 0 4.80 8.00A3.2 3.2 0 1 0 11.20 8.00Z"/></svg>
<span class="t" style="left:366.3px;top:634.87px;font-size:9.6px;line-height:9.6px;color:#e1e0e1;letter-spacing:-0.081px;">Захват выходного аудиопотока</span>
<span class="t" style="left:535px;top:634.87px;font-size:9.6px;line-height:9.6px;color:#e1e0e1;letter-spacing:-0.045px;">0.0 dB</span>
<div style="left:371px;top:647px;width:127px;height:3px;background:#267f26;"></div>
<div style="left:498px;top:647px;width:35px;height:3px;background:#7f7f26;"></div>
<div style="left:533px;top:647px;width:29px;height:3px;background:#7f2626;"></div>
<svg style="left:371px;top:650px;" width="192" height="3" viewBox="0 0 192 3"><rect x="0" y="0" width="1" height="3" fill="#e8e8e8"/><rect x="3" y="0" width="1" height="2" fill="#9c9c9c"/><rect x="6" y="0" width="1" height="2" fill="#9c9c9c"/><rect x="10" y="0" width="1" height="2" fill="#9c9c9c"/><rect x="13" y="0" width="1" height="2" fill="#9c9c9c"/><rect x="16" y="0" width="1" height="3" fill="#e8e8e8"/><rect x="19" y="0" width="1" height="2" fill="#9c9c9c"/><rect x="22" y="0" width="1" height="2" fill="#9c9c9c"/><rect x="25" y="0" width="1" height="2" fill="#9c9c9c"/><rect x="28" y="0" width="1" height="2" fill="#9c9c9c"/><rect x="32" y="0" width="1" height="3" fill="#e8e8e8"/><rect x="35" y="0" width="1" height="2" fill="#9c9c9c"/><rect x="38" y="0" width="1" height="2" fill="#9c9c9c"/><rect x="41" y="0" width="1" height="2" fill="#9c9c9c"/><rect x="44" y="0" width="1" height="2" fill="#9c9c9c"/><rect x="48" y="0" width="1" height="3" fill="#e8e8e8"/><rect x="51" y="0" width="1" height="2" fill="#9c9c9c"/><rect x="54" y="0" width="1" height="2" fill="#9c9c9c"/><rect x="57" y="0" width="1" height="2" fill="#9c9c9c"/><rect x="60" y="0" width="1" height="2" fill="#9c9c9c"/><rect x="63" y="0" width="1" height="3" fill="#e8e8e8"/><rect x="66" y="0" width="1" height="2" fill="#9c9c9c"/><rect x="70" y="0" width="1" height="2" fill="#9c9c9c"/><rect x="73" y="0" width="1" height="2" fill="#9c9c9c"/><rect x="76" y="0" width="1" height="2" fill="#9c9c9c"/><rect x="79" y="0" width="1" height="3" fill="#e8e8e8"/><rect x="82" y="0" width="1" height="2" fill="#9c9c9c"/><rect x="86" y="0" width="1" height="2" fill="#9c9c9c"/><rect x="89" y="0" width="1" height="2" fill="#9c9c9c"/><rect x="92" y="0" width="1" height="2" fill="#9c9c9c"/><rect x="95" y="0" width="1" height="3" fill="#e8e8e8"/><rect x="98" y="0" width="1" height="2" fill="#9c9c9c"/><rect x="101" y="0" width="1" height="2" fill="#9c9c9c"/><rect x="104" y="0" width="1" height="2" fill="#9c9c9c"/><rect x="108" y="0" width="1" height="2" fill="#9c9c9c"/><rect x="111" y="0" width="1" height="3" fill="#e8e8e8"/><rect x="114" y="0" width="1" height="2" fill="#9c9c9c"/><rect x="117" y="0" width="1" height="2" fill="#9c9c9c"/><rect x="120" y="0" width="1" height="2" fill="#9c9c9c"/><rect x="124" y="0" width="1" height="2" fill="#9c9c9c"/><rect x="127" y="0" width="1" height="3" fill="#e8e8e8"/><rect x="130" y="0" width="1" height="2" fill="#9c9c9c"/><rect x="133" y="0" width="1" height="2" fill="#9c9c9c"/><rect x="136" y="0" width="1" height="2" fill="#9c9c9c"/><rect x="139" y="0" width="1" height="2" fill="#9c9c9c"/><rect x="142" y="0" width="1" height="3" fill="#e8e8e8"/><rect x="146" y="0" width="1" height="2" fill="#9c9c9c"/><rect x="149" y="0" width="1" height="2" fill="#9c9c9c"/><rect x="152" y="0" width="1" height="2" fill="#9c9c9c"/><rect x="155" y="0" width="1" height="2" fill="#9c9c9c"/><rect x="158" y="0" width="1" height="3" fill="#e8e8e8"/><rect x="162" y="0" width="1" height="2" fill="#9c9c9c"/><rect x="165" y="0" width="1" height="2" fill="#9c9c9c"/><rect x="168" y="0" width="1" height="2" fill="#9c9c9c"/><rect x="171" y="0" width="1" height="2" fill="#9c9c9c"/><rect x="174" y="0" width="1" height="3" fill="#e8e8e8"/><rect x="177" y="0" width="1" height="2" fill="#9c9c9c"/><rect x="180" y="0" width="1" height="2" fill="#9c9c9c"/><rect x="184" y="0" width="1" height="2" fill="#9c9c9c"/><rect x="187" y="0" width="1" height="2" fill="#9c9c9c"/><rect x="190" y="0" width="1" height="3" fill="#e8e8e8"/></svg>
<span class="t" style="left:365.8px;top:653.58px;font-size:6.4px;line-height:6.4px;color:#c4c4c4;letter-spacing:0.340px;">-60</span>
<span class="t" style="left:381.6333333333333px;top:653.58px;font-size:6.4px;line-height:6.4px;color:#c4c4c4;letter-spacing:0.340px;">-55</span>
<span class="t" style="left:397.4666666666667px;top:653.58px;font-size:6.4px;line-height:6.4px;color:#c4c4c4;letter-spacing:0.340px;">-50</span>
<span class="t" style="left:413.3px;top:653.58px;font-size:6.4px;line-height:6.4px;color:#c4c4c4;letter-spacing:0.340px;">-45</span>
<span class="t" style="left:429.1333333333333px;top:653.58px;font-size:6.4px;line-height:6.4px;color:#c4c4c4;letter-spacing:0.340px;">-40</span>
<span class="t" style="left:444.9666666666667px;top:653.58px;font-size:6.4px;line-height:6.4px;color:#c4c4c4;letter-spacing:0.340px;">-35</span>
<span class="t" style="left:460.8px;top:653.58px;font-size:6.4px;line-height:6.4px;color:#c4c4c4;letter-spacing:0.340px;">-30</span>
<span class="t" style="left:476.6333333333333px;top:653.58px;font-size:6.4px;line-height:6.4px;color:#c4c4c4;letter-spacing:0.340px;">-25</span>
<span class="t" style="left:492.4666666666667px;top:653.58px;font-size:6.4px;line-height:6.4px;color:#c4c4c4;letter-spacing:0.340px;">-20</span>
<span class="t" style="left:508.3px;top:653.58px;font-size:6.4px;line-height:6.4px;color:#c4c4c4;letter-spacing:0.340px;">-15</span>
<span class="t" style="left:524.1333333333334px;top:653.58px;font-size:6.4px;line-height:6.4px;color:#c4c4c4;letter-spacing:0.340px;">-10</span>
<span class="t" style="left:541.6666666666666px;top:653.58px;font-size:6.4px;line-height:6.4px;color:#c4c4c4;letter-spacing:0.675px;">-5</span>
<span class="t" style="left:558.4px;top:653.58px;font-size:6.4px;line-height:6.4px;color:#c4c4c4;letter-spacing:0.537px;">0</span>
<div style="left:366px;top:671px;width:121px;height:4px;background:#2a82da;border-radius:2px;"></div>
<div style="left:486px;top:669px;width:18px;height:8px;background:#d2d2d2;border-radius:2.5px;"></div>
<svg style="left:511px;top:665px;" width="23" height="16" viewBox="0 0 23 16"><path d="M0.4 4.4H4.6L11 0V16L4.6 11.6H0.4Z" fill="#d2d2d2"/><path d="M13.6 4.6Q16.4 8 13.6 11.4" fill="none" stroke="#d2d2d2" stroke-width="1.8" stroke-linecap="round"/><path d="M17.4 1Q24.2 8 17.4 15" fill="none" stroke="#d2d2d2" stroke-width="1.8" stroke-linecap="round"/></svg>
<svg style="left:543px;top:665px;" width="16" height="16" viewBox="0 0 16 16"><path fill-rule="evenodd" fill="#d2d2d2" d="M6.27 2.09L6.83 0.09L9.17 0.09L9.73 2.09L10.96 2.60L12.77 1.57L14.43 3.23L13.40 5.04L13.91 6.27L15.91 6.83L15.91 9.17L13.91 9.73L13.40 10.96L14.43 12.77L12.77 14.43L10.96 13.40L9.73 13.91L9.17 15.91L6.83 15.91L6.27 13.91L5.04 13.40L3.23 14.43L1.57 12.77L2.60 10.96L2.09 9.73L0.09 9.17L0.09 6.83L2.09 6.27L2.60 5.04L1.57 3.23L3.23 1.57L5.04 2.60ZM11.20 8.00A3.2 3.2 0 1 0 4.80 8.00A3.2 3.2 0 1 0 11.20 8.00Z"/></svg>
<span class="t" style="left:366.3px;top:693.37px;font-size:9.6px;line-height:9.6px;color:#e1e0e1;letter-spacing:-0.157px;">Устройство воспроизведения</span>
<span class="t" style="left:535px;top:693.37px;font-size:9.6px;line-height:9.6px;color:#e1e0e1;letter-spacing:-0.045px;">0.0 dB</span>
<div style="left:371px;top:705.5px;width:127px;height:3px;background:#4cff4c;"></div>
<div style="left:498px;top:705.5px;width:32px;height:3px;background:#ffff4c;"></div>
<div style="left:530px;top:705.5px;width:3px;height:3px;background:#000;"></div>
<div style="left:533px;top:705.5px;width:29px;height:3px;background:#ff4c4c;"></div>
<div style="left:366px;top:705.5px;width:3px;height:3px;background:#ffffff;"></div>
<div style="left:371px;top:709.5px;width:127px;height:3px;background:#4cff4c;"></div>
<div style="left:498px;top:709.5px;width:32px;height:3px;background:#ffff4c;"></div>
<div style="left:530px;top:709.5px;width:3px;height:3px;background:#000;"></div>
<div style="left:533px;top:709.5px;width:29px;height:3px;background:#ff4c4c;"></div>
<div style="left:366px;top:709.5px;width:3px;height:3px;background:#ffffff;"></div>
<svg style="left:371px;top:712.5px;" width="192" height="3" viewBox="0 0 192 3"><rect x="0" y="0" width="1" height="3" fill="#e8e8e8"/><rect x="3" y="0" width="1" height="2" fill="#9c9c9c"/><rect x="6" y="0" width="1" height="2" fill="#9c9c9c"/><rect x="10" y="0" width="1" height="2" fill="#9c9c9c"/><rect x="13" y="0" width="1" height="2" fill="#9c9c9c"/><rect x="16" y="0" width="1" height="3" fill="#e8e8e8"/><rect x="19" y="0" width="1" height="2" fill="#9c9c9c"/><rect x="22" y="0" width="1" height="2" fill="#9c9c9c"/><rect x="25" y="0" width="1" height="2" fill="#9c9c9c"/><rect x="28" y="0" width="1" height="2" fill="#9c9c9c"/><rect x="32" y="0" width="1" height="3" fill="#e8e8e8"/><rect x="35" y="0" width="1" height="2" fill="#9c9c9c"/><rect x="38" y="0" width="1" height="2" fill="#9c9c9c"/><rect x="41" y="0" width="1" height="2" fill="#9c9c9c"/><rect x="44" y="0" width="1" height="2" fill="#9c9c9c"/><rect x="48" y="0" width="1" height="3" fill="#e8e8e8"/><rect x="51" y="0" width="1" height="2" fill="#9c9c9c"/><rect x="54" y="0" width="1" height="2" fill="#9c9c9c"/><rect x="57" y="0" width="1" height="2" fill="#9c9c9c"/><rect x="60" y="0" width="1" height="2" fill="#9c9c9c"/><rect x="63" y="0" width="1" height="3" fill="#e8e8e8"/><rect x="66" y="0" width="1" height="2" fill="#9c9c9c"/><rect x="70" y="0" width="1" height="2" fill="#9c9c9c"/><rect x="73" y="0" width="1" height="2" fill="#9c9c9c"/><rect x="76" y="0" width="1" height="2" fill="#9c9c9c"/><rect x="79" y="0" width="1" height="3" fill="#e8e8e8"/><rect x="82" y="0" width="1" height="2" fill="#9c9c9c"/><rect x="86" y="0" width="1" height="2" fill="#9c9c9c"/><rect x="89" y="0" width="1" height="2" fill="#9c9c9c"/><rect x="92" y="0" width="1" height="2" fill="#9c9c9c"/><rect x="95" y="0" width="1" height="3" fill="#e8e8e8"/><rect x="98" y="0" width="1" height="2" fill="#9c9c9c"/><rect x="101" y="0" width="1" height="2" fill="#9c9c9c"/><rect x="104" y="0" width="1" height="2" fill="#9c9c9c"/><rect x="108" y="0" width="1" height="2" fill="#9c9c9c"/><rect x="111" y="0" width="1" height="3" fill="#e8e8e8"/><rect x="114" y="0" width="1" height="2" fill="#9c9c9c"/><rect x="117" y="0" width="1" height="2" fill="#9c9c9c"/><rect x="120" y="0" width="1" height="2" fill="#9c9c9c"/><rect x="124" y="0" width="1" height="2" fill="#9c9c9c"/><rect x="127" y="0" width="1" height="3" fill="#e8e8e8"/><rect x="130" y="0" width="1" height="2" fill="#9c9c9c"/><rect x="133" y="0" width="1" height="2" fill="#9c9c9c"/><rect x="136" y="0" width="1" height="2" fill="#9c9c9c"/><rect x="139" y="0" width="1" height="2" fill="#9c9c9c"/><rect x="142" y="0" width="1" height="3" fill="#e8e8e8"/><rect x="146" y="0" width="1" height="2" fill="#9c9c9c"/><rect x="149" y="0" width="1" height="2" fill="#9c9c9c"/><rect x="152" y="0" width="1" height="2" fill="#9c9c9c"/><rect x="155" y="0" width="1" height="2" fill="#9c9c9c"/><rect x="158" y="0" width="1" height="3" fill="#e8e8e8"/><rect x="162" y="0" width="1" height="2" fill="#9c9c9c"/><rect x="165" y="0" width="1" height="2" fill="#9c9c9c"/><rect x="168" y="0" width="1" height="2" fill="#9c9c9c"/><rect x="171" y="0" width="1" height="2" fill="#9c9c9c"/><rect x="174" y="0" width="1" height="3" fill="#e8e8e8"/><rect x="177" y="0" width="1" height="2" fill="#9c9c9c"/><rect x="180" y="0" width="1" height="2" fill="#9c9c9c"/><rect x="184" y="0" width="1" height="2" fill="#9c9c9c"/><rect x="187" y="0" width="1" height="2" fill="#9c9c9c"/><rect x="190" y="0" width="1" height="3" fill="#e8e8e8"/></svg>
<span class="t" style="left:365.8px;top:716.08px;font-size:6.4px;line-height:6.4px;color:#c4c4c4;letter-spacing:0.340px;">-60</span>
<span class="t" style="left:381.6333333333333px;top:716.08px;font-size:6.4px;line-height:6.4px;color:#c4c4c4;letter-spacing:0.340px;">-55</span>
<span class="t" style="left:397.4666666666667px;top:716.08px;font-size:6.4px;line-height:6.4px;color:#c4c4c4;letter-spacing:0.340px;">-50</span>
<span class="t" style="left:413.3px;top:716.08px;font-size:6.4px;line-height:6.4px;color:#c4c4c4;letter-spacing:0.340px;">-45</span>
<span class="t" style="left:429.1333333333333px;top:716.08px;font-size:6.4px;line-height:6.4px;color:#c4c4c4;letter-spacing:0.340px;">-40</span>
<span class="t" style="left:444.9666666666667px;top:716.08px;font-size:6.4px;line-height:6.4px;color:#c4c4c4;letter-spacing:0.340px;">-35</span>
<span class="t" style="left:460.8px;top:716.08px;font-size:6.4px;line-height:6.4px;color:#c4c4c4;letter-spacing:0.340px;">-30</span>
<span class="t" style="left:476.6333333333333px;top:716.08px;font-size:6.4px;line-height:6.4px;color:#c4c4c4;letter-spacing:0.340px;">-25</span>
<span class="t" style="left:492.4666666666667px;top:716.08px;font-size:6.4px;line-height:6.4px;color:#c4c4c4;letter-spacing:0.340px;">-20</span>
<span class="t" style="left:508.3px;top:716.08px;font-size:6.4px;line-height:6.4px;color:#c4c4c4;letter-spacing:0.340px;">-15</span>
<span class="t" style="left:524.1333333333334px;top:716.08px;font-size:6.4px;line-height:6.4px;color:#c4c4c4;letter-spacing:0.340px;">-10</span>
<span class="t" style="left:541.6666666666666px;top:716.08px;font-size:6.4px;line-height:6.4px;color:#c4c4c4;letter-spacing:0.675px;">-5</span>
<span class="t" style="left:558.4px;top:716.08px;font-size:6.4px;line-height:6.4px;color:#c4c4c4;letter-spacing:0.537px;">0</span>
<div style="left:366px;top:733.5px;width:121px;height:4px;background:#2a82da;border-radius:2px;"></div>
<div style="left:486px;top:731.5px;width:18px;height:8px;background:#d2d2d2;border-radius:2.5px;"></div>
<svg style="left:511px;top:727.5px;" width="23" height="16" viewBox="0 0 23 16"><path d="M0.4 4.4H4.6L11 0V16L4.6 11.6H0.4Z" fill="#d2d2d2"/><path d="M13.6 4.6Q16.4 8 13.6 11.4" fill="none" stroke="#d2d2d2" stroke-width="1.8" stroke-linecap="round"/><path d="M17.4 1Q24.2 8 17.4 15" fill="none" stroke="#d2d2d2" stroke-width="1.8" stroke-linecap="round"/></svg>
<svg style="left:543px;top:727.5px;" width="16" height="16" viewBox="0 0 16 16"><path fill-rule="evenodd" fill="#d2d2d2" d="M6.27 2.09L6.83 0.09L9.17 0.09L9.73 2.09L10.96 2.60L12.77 1.57L14.43 3.23L13.40 5.04L13.91 6.27L15.91 6.83L15.91 9.17L13.91 9.73L13.40 10.96L14.43 12.77L12.77 14.43L10.96 13.40L9.73 13.91L9.17 15.91L6.83 15.91L6.27 13.91L5.04 13.40L3.23 14.43L1.57 12.77L2.60 10.96L2.09 9.73L0.09 9.17L0.09 6.83L2.09 6.27L2.60 5.04L1.57 3.23L3.23 1.57L5.04 2.60ZM11.20 8.00A3.2 3.2 0 1 0 4.80 8.00A3.2 3.2 0 1 0 11.20 8.00Z"/></svg>
<div style="left:361px;top:738px;width:220px;height:25px;background:#3a393a;"></div>
<div style="left:589px;top:571px;width:130px;height:20px;background:#4c4c4c;border-radius:3px;"></div>
<div style="left:698px;top:571px;width:1px;height:20px;background:#3a393a;"></div>
<svg style="left:705.5px;top:575.5px;" width="7" height="12" viewBox="0 0 7 12"><path d="M0.4 3.6L3.5 0.6L6.6 3.6M0.4 8.4L3.5 11.4L6.6 8.4" fill="none" stroke="#c8c8c8" stroke-width="0.9"/></svg>
<svg style="left:726px;top:573px;" width="16" height="16" viewBox="0 0 16 16"><path fill-rule="evenodd" fill="#d2d2d2" d="M6.27 2.09L6.83 0.09L9.17 0.09L9.73 2.09L10.96 2.60L12.77 1.57L14.43 3.23L13.40 5.04L13.91 6.27L15.91 6.83L15.91 9.17L13.91 9.73L13.40 10.96L14.43 12.77L12.77 14.43L10.96 13.40L9.73 13.91L9.17 15.91L6.83 15.91L6.27 13.91L5.04 13.40L3.23 14.43L1.57 12.77L2.60 10.96L2.09 9.73L0.09 9.17L0.09 6.83L2.09 6.27L2.60 5.04L1.57 3.23L3.23 1.57L5.04 2.60ZM11.20 8.00A3.2 3.2 0 1 0 4.80 8.00A3.2 3.2 0 1 0 11.20 8.00Z"/></svg>
<span class="t" style="left:598.6px;top:576.69px;font-size:11px;line-height:11px;color:#e1e0e1;letter-spacing:0.128px;">Затухание</span>
<span class="t" style="left:589.4px;top:599.69px;font-size:11px;line-height:11px;color:#e1e0e1;letter-spacing:0.035px;">Длительность</span>
<div style="left:666px;top:594px;width:79px;height:21px;background:#1f1e1f;border-radius:3px;"></div>
<div style="left:729px;top:594px;width:16px;height:10px;background:#4c4c4c;border-radius:3px 3px 0 0;"></div>
<div style="left:729px;top:605px;width:16px;height:10px;background:#4c4c4c;border-radius:0 0 3px 3px;"></div>
<svg style="left:731.5px;top:596px;" width="11" height="6" viewBox="0 0 11 6"><path d="M0.4 5.6L5.5 0.7L10.6 5.6" fill="none" stroke="#e0e0e0" stroke-width="1.2"/></svg>
<svg style="left:731.5px;top:607px;" width="11" height="6" viewBox="0 0 11 6"><path d="M0.4 0.4L5.5 5.3L10.6 0.4" fill="none" stroke="#e0e0e0" stroke-width="1"/></svg>
<span class="t" style="left:675px;top:599.69px;font-size:11px;line-height:11px;color:#e1e0e1;letter-spacing:-0.250px;transform:scaleX(0.9769);transform-origin:0 0;">300 ms</span>
<div style="left:757px;top:570px;width:204px;height:21px;background:#4c4c4c;border-radius:3px;"></div>
<span class="t" style="left:799.4px;top:576.09px;font-size:11px;line-height:11px;color:#e1e0e1;letter-spacing:0.106px;">Запустить трансляцию</span>
<div style="left:757px;top:593px;width:204px;height:21px;background:#4c4c4c;border-radius:3px;"></div>
<span class="t" style="left:821.3px;top:599.09px;font-size:11px;line-height:11px;color:#e1e0e1;letter-spacing:0.044px;">Начать запись</span>
<div style="left:757px;top:616px;width:204px;height:21px;background:#4c4c4c;border-radius:3px;"></div>
<span class="t" style="left:776.6px;top:622.09px;font-size:11px;line-height:11px;color:#e1e0e1;letter-spacing:0.124px;">Запустить виртуальную камеру</span>
<div style="left:757px;top:639px;width:204px;height:21px;background:#4c4c4c;border-radius:3px;"></div>
<span class="t" style="left:822.5px;top:645.09px;font-size:11px;line-height:11px;color:#e1e0e1;letter-spacing:-0.042px;">Режим студии</span>
<div style="left:757px;top:662px;width:204px;height:21px;background:#4c4c4c;border-radius:3px;"></div>
<span class="t" style="left:831.5px;top:668.09px;font-size:11px;line-height:11px;color:#e1e0e1;letter-spacing:0.007px;">Настройки</span>
<div style="left:757px;top:685px;width:204px;height:21px;background:#4c4c4c;border-radius:3px;"></div>
<span class="t" style="left:841.5px;top:691.09px;font-size:11px;line-height:11px;color:#e1e0e1;letter-spacing:0.017px;">Выход</span>
<div style="left:749.4px;top:583.4px;width:217.4px;height:38.4px;box-sizing:border-box;border:4.3px solid #ff0000;border-radius:9.5px;background:none;box-shadow:inset 0 0 3px 1.5px rgba(0,0,0,0.62),0 0 3px 0.5px rgba(0,0,0,0.4);"></div>
<span class="t" style="left:582.4px;top:746.89px;font-size:11px;line-height:11px;color:#e1e0e1;letter-spacing:-0.021px;">LIVE: 00:00:00</span>
<span class="t" style="left:686.5px;top:746.89px;font-size:11px;line-height:11px;color:#e1e0e1;letter-spacing:-0.069px;">REC: 00:00:00</span>
<span class="t" style="left:783.4px;top:746.89px;font-size:11px;line-height:11px;color:#e1e0e1;letter-spacing:0.052px;">CPU: 7.4%, 30.00 fps</span>
<svg style="left:666px;top:746.5px;" width="10" height="10" viewBox="0 0 10 10"><circle cx="5" cy="5" r="5" fill="#8c8c8c"/></svg>
<svg style="left:557px;top:744px;" width="20" height="14" viewBox="0 0 20 14"><circle cx="10" cy="7" r="3.7" fill="#808080"/><path d="M5.8 2.4Q3.2 7 5.8 11.6M14.2 2.4Q16.8 7 14.2 11.6" fill="none" stroke="#808080" stroke-width="1.4"/><path d="M3.2 0.8Q-0.4 7 3.2 13.2M16.8 0.8Q20.4 7 16.8 13.2" fill="none" stroke="#808080" stroke-width="1.4"/></svg>
</div>
</body>
</html>
